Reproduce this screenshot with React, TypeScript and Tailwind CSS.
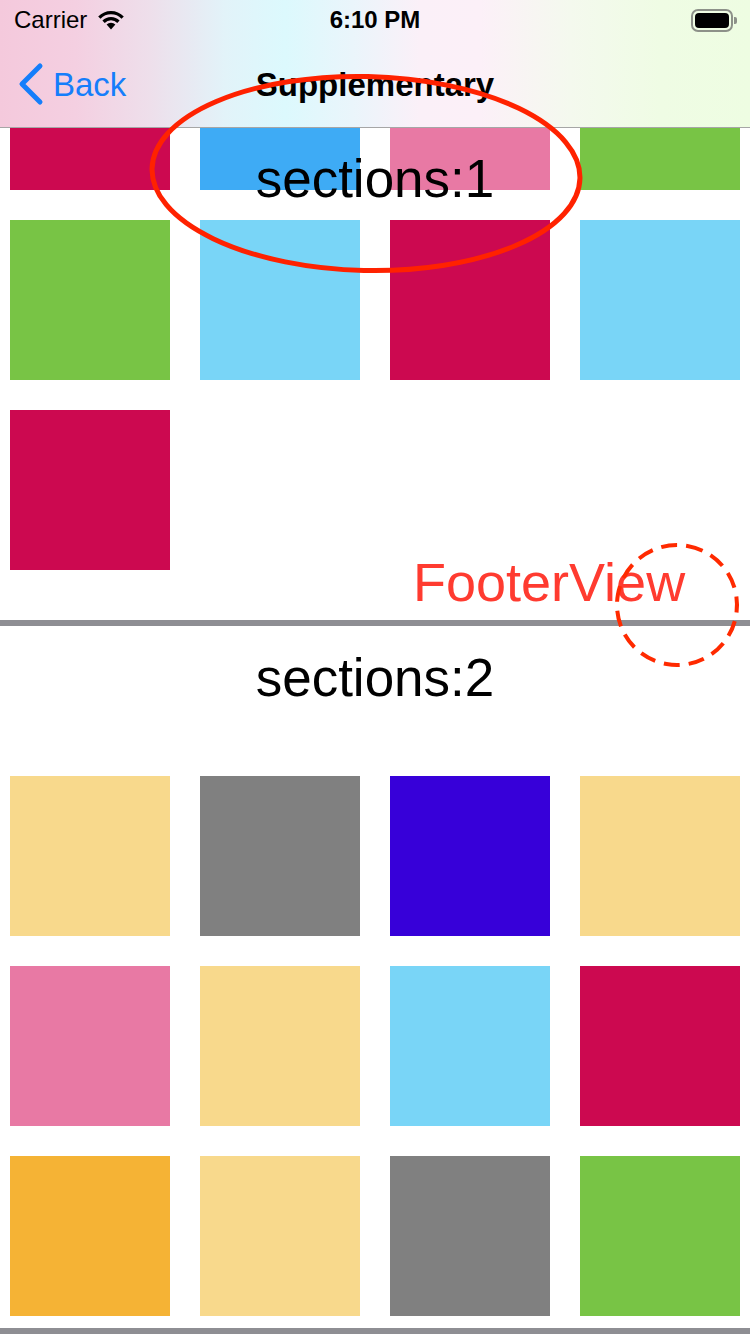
import React from "react";

const C = {
  crimson: "bg-[#cc0950]",
  blue: "bg-[#3eabf5]",
  pink: "bg-[#e879a4]",
  green: "bg-[#78c445]",
  light: "bg-[#79d5f7]",
  yellow: "bg-[#f8d98c]",
  gray: "bg-[#808080]",
  purple: "bg-[#3700d9]",
  orange: "bg-[#f5b335]",
};

const section1 = [
  C.crimson, C.blue, C.pink, C.green,
  C.green, C.light, C.crimson, C.light,
  C.crimson,
];
const section2 = [
  C.yellow, C.gray, C.purple, C.yellow,
  C.pink, C.yellow, C.light, C.crimson,
  C.orange, C.yellow, C.gray, C.green,
];

function Grid({ tiles }: { tiles: string[] }) {
  return (
    <div className="grid grid-cols-[repeat(4,160px)] gap-[30px] px-[10px]">
      {tiles.map((c, i) => (
        <div key={i} className={`h-[160px] w-[160px] ${c}`} />
      ))}
    </div>
  );
}

const font = { fontFamily: '"Liberation Sans", Arial, sans-serif' };

export default function App() {
  return (
    <div
      className="relative h-[1334px] w-[750px] overflow-hidden bg-white text-black"
      style={font}
    >
      {/* scroll content */}
      <div className="flex flex-col pt-[30px]">
        <Grid tiles={section1} />
        <div className="h-[50px]" />
        <div className="h-[6px] bg-[#8e8e93]" />
        <div className="flex h-[100px] items-center justify-center pt-[2px] text-[53px] leading-none">
          sections:2
        </div>
        <div className="h-[50px]" />
        <Grid tiles={section2} />
        <div className="h-[12px]" />
        <div className="h-[6px] bg-[#8e8e93]" />
      </div>

      {/* pinned header for section 1 */}
      <div className="absolute left-0 right-0 top-[128px] flex h-[100px] items-center justify-center text-[53px] leading-none">
        sections:1
      </div>

      {/* navigation bar */}
      <div className="absolute left-0 right-0 top-0 h-[128px] border-b border-[#a6a6a6] bg-[linear-gradient(90deg,#f4c9dc_0%,#f4cfe1_10%,#eedfeb_20%,#e2f3f9_30%,#dcf9fd_38%,#eaf5fb_47%,#fbf0f8_56%,#fcf0f8_64%,#f4f9ee_76%,#effce4_88%,#eefde2_100%)]">
        {/* status bar */}
        <div className="relative flex h-[40px] items-center pl-[14px] pr-[13px]">
          <div className="flex items-center gap-[10px]">
            <span className="text-[24px] leading-none">Carrier</span>
            <svg width="28" height="20" viewBox="0 0 28 20">
              <path d="M14 19.5 L9.6 14.6 A6.4 6.4 0 0 1 18.4 14.6 Z" fill="#000" />
              <path d="M5.4 10.6 A12 12 0 0 1 22.6 10.6 L20.3 13 A8.6 8.6 0 0 0 7.7 13 Z" fill="#000" />
              <path d="M1.2 6.4 A18 18 0 0 1 26.8 6.4 L24.5 8.8 A14.6 14.6 0 0 0 3.5 8.8 Z" fill="#000" />
            </svg>
          </div>
          <div className="absolute left-0 right-0 top-0 flex h-[40px] items-center justify-center text-[24px] font-bold leading-none">
            6:10 PM
          </div>
          <div className="ml-auto flex items-center">
            <div className="flex h-[23px] w-[42px] items-center rounded-[7px] border-[2px] border-[#8d9189] p-[2px]">
              <div className="h-full w-full rounded-[4px] bg-black" />
            </div>
            <div className="ml-[1px] h-[7px] w-[3px] rounded-r-[2px] bg-[#8d9189]" />
          </div>
        </div>
        {/* nav row */}
        <div className="relative flex h-[88px] items-center">
          <div className="flex items-center pl-[18px] text-[#157efb]">
            <svg width="26" height="44" viewBox="0 0 26 44">
              <polyline
                points="22,4 4,22 22,40"
                fill="none"
                stroke="#157efb"
                strokeWidth="5"
                strokeLinecap="round"
                strokeLinejoin="round"
              />
            </svg>
            <span className="ml-[9px] text-[33px] leading-none">Back</span>
          </div>
          <div className="absolute inset-0 flex items-center justify-center text-[33px] font-bold leading-none">
            Supplementary
          </div>
        </div>
      </div>

      {/* annotations */}
      <div className="absolute left-[413px] top-[555px] text-[54px] leading-none text-[#ff3b30]">
        FooterView
      </div>
      <svg
        className="pointer-events-none absolute left-0 top-0"
        width="750"
        height="1334"
        viewBox="0 0 750 1334"
      >
        <ellipse
          cx="366"
          cy="173.5"
          rx="214"
          ry="97"
          fill="none"
          stroke="#ff2200"
          strokeWidth="5"
          transform="rotate(1.3 366 173.5)"
        />
        <circle
          cx="677"
          cy="605"
          r="60"
          fill="none"
          stroke="#ff2a00"
          strokeWidth="4"
          strokeDasharray="16 9"
          transform="rotate(-80 677 605)"
        />
      </svg>
    </div>
  );
}
